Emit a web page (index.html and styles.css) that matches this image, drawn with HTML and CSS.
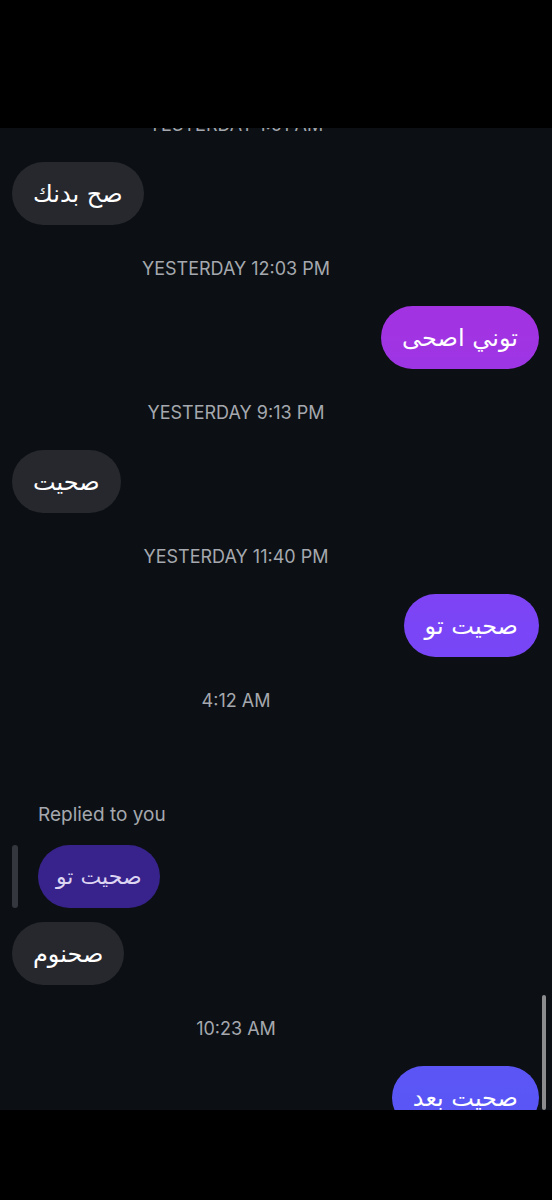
FILE: index.html
```html
<!DOCTYPE html>
<html lang="en">
<head>
<meta charset="utf-8">
<title>Chat</title>
<link rel="stylesheet" href="styles.css">
</head>
<body>
<div class="screen">
  <div class="top-bar"></div>
  <div class="chat">
    <div class="list">
      <div class="stamp">YESTERDAY 1:01 AM</div>
      <div class="row in"><div class="bubble recv" dir="rtl">صح بدنك</div></div>
      <div class="stamp">YESTERDAY 12:03 PM</div>
      <div class="row out"><div class="bubble sent" dir="rtl">توني اصحى</div></div>
      <div class="stamp">YESTERDAY 9:13 PM</div>
      <div class="row in"><div class="bubble recv" dir="rtl">صحيت</div></div>
      <div class="stamp">YESTERDAY 11:40 PM</div>
      <div class="row out"><div class="bubble sent" dir="rtl">صحيت تو</div></div>
      <div class="stamp">4:12 AM</div>
      <div class="spacer"></div>
      <div class="reply-label">Replied to you</div>
      <div class="reply">
        <div class="reply-bar"></div>
        <div class="bubble quote" dir="rtl">صحيت تو</div>
      </div>
      <div class="row in tight"><div class="bubble recv" dir="rtl">صحنوم</div></div>
      <div class="stamp">10:23 AM</div>
      <div class="row out"><div class="bubble sent" dir="rtl">صحيت بعد</div></div>
    </div>
    <div class="scrollbar"></div>
  </div>
  <div class="bottom-bar"></div>
</div>
</body>
</html>
```

FILE: styles.css
```css
html, body {
  margin: 0;
  padding: 0;
  background: #000;
}

.screen {
  width: 552px;
  height: 1200px;
  display: flex;
  flex-direction: column;
  font-family: Inter, "Liberation Sans", sans-serif;
}

.top-bar {
  height: 128px;
  background: #000;
  flex: none;
}

.bottom-bar {
  height: 90px;
  background: #000;
  flex: none;
}

.chat {
  height: 982px;
  flex: none;
  background: #0c1014;
  overflow: hidden;
  position: relative;
}

.list {
  margin-top: -47px;
  display: flex;
  flex-direction: column;
}

.stamp {
  padding: 34px 80px 27px 0;
  line-height: 20px;
  font-size: 18px;
  color: #a5a8ae;
  text-align: center;
}

.row {
  display: flex;
  padding: 0 13px 0 12px;
}

.row.in {
  justify-content: flex-start;
}

.row.out {
  justify-content: flex-end;
}

.row.tight {
  margin-top: 14px;
}

.bubble {
  height: 63px;
  box-sizing: border-box;
  padding: 0 21px;
  border-radius: 32px;
  display: flex;
  align-items: center;
  font-family: "DejaVu Sans", sans-serif;
  font-size: 24px;
  color: #fff;
  white-space: nowrap;
}

.recv {
  background: #26282e;
}

.sent {
  background-image: linear-gradient(180deg, #a833de 0px, #a233e2 330px, #7a45f6 625px, #5a56f6 1100px, #5a56f6 1200px);
  background-attachment: fixed;
}

.spacer {
  height: 67px;
}

.reply-label {
  padding-left: 38px;
  font-size: 19px;
  line-height: 20px;
  color: #a5a8ae;
  margin-bottom: 20px;
}

.reply {
  display: flex;
  align-items: stretch;
  padding-left: 12px;
  gap: 20px;
}

.reply-bar {
  width: 6px;
  border-radius: 3px;
  background: #34373e;
}

.quote {
  background: #37238b;
  color: #ddd5f2;
  font-size: 22px;
  padding: 0 18px;
}

.scrollbar {
  position: absolute;
  right: 6px;
  bottom: 0;
  width: 4px;
  height: 115px;
  border-radius: 2px;
  background: #8c8c8e;
}
```
